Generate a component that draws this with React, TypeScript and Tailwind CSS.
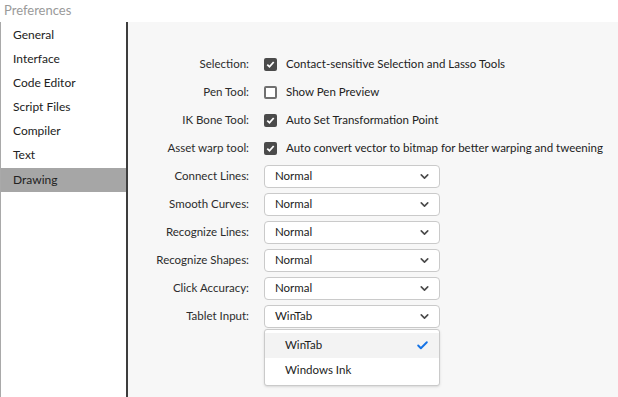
import { Check, ChevronDown } from 'lucide-react';

const categories = ['General', 'Interface', 'Code Editor', 'Script Files', 'Compiler', 'Text', 'Drawing'];

const checks = [
    { label: 'Selection:', text: 'Contact-sensitive Selection and Lasso Tools', on: true },
    { label: 'Pen Tool:', text: 'Show Pen Preview', on: false },
    { label: 'IK Bone Tool:', text: 'Auto Set Transformation Point', on: true },
    { label: 'Asset warp tool:', text: 'Auto convert vector to bitmap for better warping and tweening', on: true },
];

const selects = [
    { label: 'Connect Lines:', value: 'Normal' },
    { label: 'Smooth Curves:', value: 'Normal' },
    { label: 'Recognize Lines:', value: 'Normal' },
    { label: 'Recognize Shapes:', value: 'Normal' },
    { label: 'Click Accuracy:', value: 'Normal' },
];

function Box({ on }: { on: boolean }) {
    if (!on) return <span className="w-[13px] h-[13px] rounded-[2px] border-2 border-[#707070] bg-white" />;
    return (
        <span className="w-[13px] h-[13px] rounded-[2px] bg-[#4b4b4b] flex items-center justify-center">
            <svg width="9" height="9" viewBox="0 0 9 9" fill="none">
                <path d="M1.3 4.6 L3.5 6.8 L7.7 2" stroke="white" strokeWidth="1.8" />
            </svg>
        </span>
    );
}

function Label({ children }: { children: string }) {
    return <div className="w-[136px] text-right pr-[15px] text-[#2c2c2c]">{children}</div>;
}

function Select({ value }: { value: string }) {
    return (
        <div className="w-[176px] h-[23px] flex items-center justify-between pl-[10px] pr-[8px] bg-white border border-[#cacaca] rounded-[4px]">
            <span>{value}</span>
            <ChevronDown className="w-[13px] h-[13px] text-[#4b4b4b]" strokeWidth={3} />
        </div>
    );
}

export default function App() {
    return (
        <div className="w-[618px] h-[397px] bg-white flex flex-col text-[11.5px] text-[#222] overflow-hidden" style={{ fontFamily: 'Lato, "Open Sans", sans-serif' }}>
            <div className="h-[22px] pl-[4px] pt-[1px] text-[13px] text-[#9a9a9a]">Preferences</div>
            <div className="flex flex-1 border-l border-[#a9a9a9]">
                <div className="w-[125px] pt-[1px] flex flex-col text-[12px]">
                    {categories.map((c) => (
                        <div key={c} className={`h-[24px] pl-[12px] flex items-center ${c === 'Drawing' ? 'bg-[#a6a6a6] mt-[1px] h-[22px]' : ''}`}>
                            {c}
                        </div>
                    ))}
                </div>
                <div className="flex-1 bg-[#f7f7f7] border-l-2 border-[#3d3d3d] pt-[28px] flex flex-col">
                    {checks.map((r) => (
                        <div key={r.label} className="h-[28px] flex items-center">
                            <Label>{r.label}</Label>
                            <Box on={r.on} />
                            <span className="ml-[9px]">{r.text}</span>
                        </div>
                    ))}
                    {selects.map((r) => (
                        <div key={r.label} className="h-[28px] flex items-center">
                            <Label>{r.label}</Label>
                            <Select value={r.value} />
                        </div>
                    ))}
                    <div className="h-[28px] flex items-center">
                        <Label>Tablet Input:</Label>
                        <div className="relative">
                            <Select value="WinTab" />
                            <div className="absolute left-0 top-[24px] w-[176px] bg-white border border-[#cacaca] rounded-[3px] shadow-sm pt-[3px] pb-[2px]">
                                <div className="h-[25px] flex items-center justify-between pl-[20px] pr-[10px] bg-[#f3f3f3]">
                                    <span>WinTab</span>
                                    <Check className="w-[13px] h-[13px] text-[#1473e6]" strokeWidth={3.5} />
                                </div>
                                <div className="h-[25px] flex items-center pl-[20px]">Windows Ink</div>
                            </div>
                        </div>
                    </div>
                </div>
            </div>
        </div>
    );
}
